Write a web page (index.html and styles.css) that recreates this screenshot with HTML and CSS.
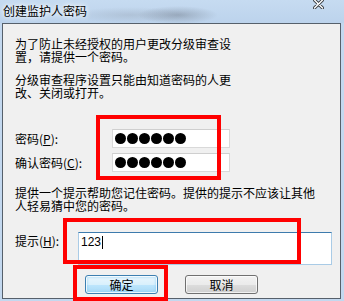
FILE: index.html
```html
<!DOCTYPE html>
<html lang="zh-CN">
<head>
<meta charset="utf-8">
<title>创建监护人密码</title>
<link rel="stylesheet" href="styles.css">
</head>
<body>
<div class="window">
  <div class="titlebar">
    <span class="title">创建监护人密码</span>
    <svg class="close" width="11" height="9" viewBox="0 0 11 9">
      <path d="M1.5 0 L9.5 8 M9.5 0 L1.5 8" stroke="#3a3f45" stroke-width="3.2" stroke-linecap="round"/>
      <path d="M1.5 0 L9.5 8 M9.5 0 L1.5 8" stroke="#ffffff" stroke-width="1.4" stroke-linecap="round"/>
    </svg>
  </div>
  <div class="client">
    <p class="para narrow">为了防止未经授权的用户更改分级审查设置，请提供一个密码。</p>
    <p class="para narrow gap">分级审查程序设置只能由知道密码的人更改、关闭或打开。</p>

    <div class="field-row first">
      <label class="label">密码(<u>P</u>):</label>
      <div class="textbox"><span class="dot"></span><span class="dot"></span><span class="dot"></span><span class="dot"></span><span class="dot"></span><span class="dot"></span></div>
    </div>
    <div class="field-row second">
      <label class="label">确认密码(<u>C</u>):</label>
      <div class="textbox"><span class="dot"></span><span class="dot"></span><span class="dot"></span><span class="dot"></span><span class="dot"></span><span class="dot"></span></div>
    </div>

    <p class="para wide">提供一个提示帮助您记住密码。提供的提示不应该让其他人轻易猜中您的密码。</p>

    <div class="hint-row">
      <label class="hint-label">提示(<u>H</u>):</label>
      <div class="hintbox">123<span class="caret"></span></div>
    </div>

    <div class="buttons">
      <div class="btn btn-default">确定</div>
      <div class="btn">取消</div>
    </div>
  </div>

  <div class="mark mark-pass"></div>
  <div class="mark mark-hint"></div>
  <div class="mark mark-ok"></div>
</div>
</body>
</html>
```

FILE: styles.css
```css
* { box-sizing: border-box; }
html, body {
  margin: 0;
  padding: 0;
}
body {
  width: 344px;
  height: 301px;
  overflow: hidden;
  font-family: "Noto Sans CJK SC", "Noto Sans", sans-serif;
  font-size: 12px;
  color: #000;
}
.window {
  position: relative;
  width: 344px;
  height: 301px;
  display: flex;
  flex-direction: column;
  background: #c3d8ef;
}
.titlebar {
  height: 23px;
  display: flex;
  align-items: flex-start;
  padding-left: 3px;
  background:
    radial-gradient(ellipse 40px 9px at 178px 15px, rgba(110,120,135,0.45), rgba(110,120,135,0) 100%),
    radial-gradient(ellipse 60px 8px at 130px 15px, rgba(140,150,165,0.3), rgba(140,150,165,0) 100%),
    linear-gradient(#c6dbf1, #bcd3ec);
}
.title {
  line-height: 13px;
  margin-top: 4px;
  text-shadow: 0 0 4px #fff, 0 0 6px #fff;
}
.close {
  margin-left: auto;
  margin-right: 20px;
  margin-top: 0;
  display: block;
}
.client {
  flex: 1;
  margin: 0 3px 2px 2px;
  border: 1px solid #56606b;
  background: #f0f0f0;
  padding: 13px 0 0 12px;
  display: flex;
  flex-direction: column;
  align-items: flex-start;
}
.para {
  margin: 0;
  line-height: 13px;
}
.narrow { width: 220px; }
.gap { margin-top: 10px; }
.wide { width: 306px; margin-top: 14px; }

.field-row {
  display: flex;
  align-items: center;
  height: 19px;
}
.field-row.first { margin-top: 30px; }
.field-row.second { margin-top: 5px; }
.label {
  width: 97px;
  line-height: 13px;
}
u { text-decoration: underline; }
.textbox {
  width: 118px;
  height: 19px;
  background: #fff;
  border: 1px solid #d9d9d9;
  border-top-color: #cfcfcf;
  display: flex;
  align-items: center;
  gap: 1px;
  padding-left: 2px;
}
.dot {
  width: 11px;
  height: 11px;
  border-radius: 50%;
  background: #000;
}

.hint-row {
  display: flex;
  align-items: flex-start;
  margin-top: 20px;
}
.hint-label {
  width: 63px;
  line-height: 13px;
  margin-top: 2px;
}
.hintbox {
  width: 254px;
  height: 33px;
  background: #fff;
  border: 1px solid #a9cbe6;
  border-top-color: #3d7bad;
  padding: 3px 0 0 2px;
  line-height: 13px;
  font-family: "Liberation Sans", Arial, sans-serif;
  display: flex;
  align-items: flex-start;
}
.caret {
  display: inline-block;
  width: 1px;
  height: 13px;
  margin-left: 1px;
  background: #000;
}

.buttons {
  display: flex;
  gap: 27px;
  margin-top: 10px;
  margin-left: 70px;
}
.btn {
  width: 73px;
  height: 19px;
  border: 1px solid #707070;
  border-radius: 3px;
  background: linear-gradient(#f2f2f2 0%, #ebebeb 50%, #dddddd 51%, #cfcfcf 100%);
  box-shadow: inset 0 0 0 1px rgba(255,255,255,0.7);
  display: flex;
  align-items: center;
  justify-content: center;
  line-height: 13px;
}
.btn-default {
  border-color: #3c7fb1;
  background: linear-gradient(#eaf6fd 0%, #d9f0fc 50%, #bee6fd 51%, #a7d9f5 100%);
  box-shadow: inset 0 0 0 1px rgba(255,255,255,0.8), inset 0 0 2px 2px rgba(120,200,240,0.35);
}

.mark {
  position: absolute;
  border: 4px solid #ff0000;
}
.mark-pass { left: 96px; top: 115px; width: 125px; height: 65px; }
.mark-hint { left: 63px; top: 218px; width: 238px; height: 46px; }
.mark-ok { left: 73px; top: 265px; width: 95px; height: 36px; }
```
